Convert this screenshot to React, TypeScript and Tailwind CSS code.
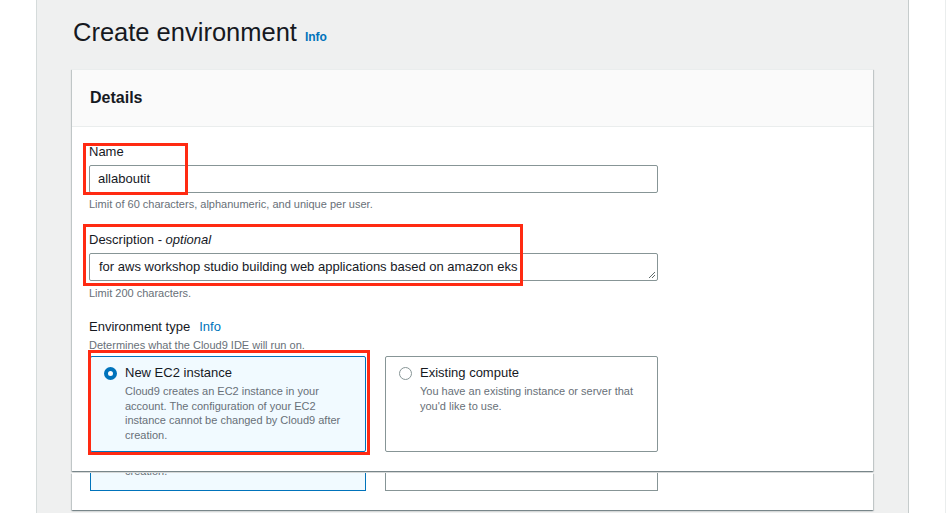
import React from 'react';

const blue = '#0073bb';

function Radio({ checked }: { checked: boolean }) {
    return checked
        ? <span className="mt-[4px] h-[13px] w-[13px] shrink-0 rounded-full border-[4px] border-[#0073bb] bg-white" />
        : <span className="mt-[4px] h-[13px] w-[13px] shrink-0 rounded-full border border-[#879596] bg-white" />;
}

function Tile({ title, desc, checked }: { title: string; desc: string; checked: boolean }) {
    return (
        <div className={`h-[96px] rounded-[2px] border pl-[13px] pr-[15px] pt-[6px] ${checked ? 'border-[#0073bb] bg-[#f1faff]' : 'border-[#879596] bg-white'}`}>
            <div className="flex gap-[8px]">
                <Radio checked={checked} />
                <div>
                    <div className="text-[13px] leading-[20px]">{title}</div>
                    <div className="mt-px text-[11px] leading-[14.5px] text-[#687078]">{desc}</div>
                </div>
            </div>
        </div>
    );
}

export default function App() {
    return (
        <div className="relative flex h-[513px] w-[948px] overflow-hidden bg-white font-['Liberation_Sans',Arial,sans-serif] text-[#16191f]">
            <div className="w-[37px] shrink-0 border-r border-[#d5dbdb]" />

            <main className="w-[872px] shrink-0 border-r border-[#c6cccc] bg-[#eff0f0] pl-[35px] pt-[17px]">
                <div className="ml-px flex items-baseline gap-[8px]">
                    <h1 className="text-[25.5px] leading-[30px]">Create environment</h1>
                    <span className="text-[12px] font-bold" style={{ color: blue }}>Info</span>
                </div>

                <section className="mt-[22px] h-[402px] w-[801px] overflow-hidden border-t border-[#eaeded] bg-white shadow-[0_1px_1px_0_rgba(0,28,36,0.3),1px_1px_1px_0_rgba(0,28,36,0.15),-1px_1px_1px_0_rgba(0,28,36,0.15)]">
                    <div className="flex h-[57px] items-center border-b border-[#eaeded] bg-[#fafafa] pl-[18px]">
                        <h2 className="text-[16px] font-bold">Details</h2>
                    </div>
                    <div className="pl-[17px] pt-[15px]">
                        <div className="text-[13px] leading-[20px]">Name</div>
                        <div className="mt-[3px] flex h-[28px] w-[569px] items-center rounded-[2px] border border-[#879596] px-[8px] text-[13px]">allaboutit</div>
                        <div className="mt-[3px] text-[11px] leading-[16px] text-[#687078]">Limit of 60 characters, alphanumeric, and unique per user.</div>

                        <div className="mt-[18px] text-[13px] leading-[20px]">Description - <i>optional</i></div>
                        <div className="relative mt-[3px] flex h-[28px] w-[569px] items-center rounded-[2px] border border-[#879596] px-[9px] text-[13px]">
                            for aws workshop studio building web applications based on amazon eks
                            <svg className="absolute bottom-[1px] right-[1px]" width="8" height="8" viewBox="0 0 8 8">
                                <path d="M7 1 L1 7 M7 4 L4 7" stroke="#5f6b6b" strokeWidth="1" />
                            </svg>
                        </div>
                        <div className="mt-[4px] text-[11px] leading-[16px] text-[#687078]">Limit 200 characters.</div>

                        <div className="mt-[16px] flex gap-[9px] text-[13px] leading-[20px]">
                            <span>Environment type</span>
                            <span style={{ color: blue }}>Info</span>
                        </div>
                        <div className="text-[11px] leading-[16px] text-[#687078]">Determines what the Cloud9 IDE will run on.</div>

                        <div className="ml-px mt-[3px] grid grid-cols-[276px_273px] gap-[19px]">
                            <Tile checked title="New EC2 instance" desc="Cloud9 creates an EC2 instance in your account. The configuration of your EC2 instance cannot be changed by Cloud9 after creation." />
                            <Tile checked={false} title="Existing compute" desc="You have an existing instance or server that you'd like to use." />
                        </div>
                    </div>
                </section>

                {/* scrolled copy of the card bottom */}
                <section className="mt-[2px] h-[37px] w-[801px] overflow-hidden bg-white shadow-[0_1px_1px_0_rgba(0,28,36,0.3),1px_1px_1px_0_rgba(0,28,36,0.15),-1px_1px_1px_0_rgba(0,28,36,0.15)]">
                    <div className="ml-[18px] -mt-[14px] grid grid-cols-[276px_273px] gap-[19px]">
                        <div className="h-[32px] border-x border-b border-[#0073bb] bg-[#f1faff] pl-[34px] pt-[5px] text-[11px] leading-[14.5px] text-[#687078]">creation.</div>
                        <div className="h-[32px] border-x border-b border-[#879596]" />
                    </div>
                </section>
            </main>

            <div className="w-[37px] shrink-0 border-r border-[#eaeded]" />

            {/* red annotation boxes */}
            <div className="absolute left-[83px] top-[143px] h-[52px] w-[105px] border-[3px] border-[#ff2a12]" />
            <div className="absolute left-[83px] top-[224px] h-[62px] w-[440px] border-[3px] border-[#ff2a12]" />
            <div className="absolute left-[88px] top-[350px] h-[105px] w-[282px] border-[3px] border-[#ff2a12]" />
        </div>
    );
}
